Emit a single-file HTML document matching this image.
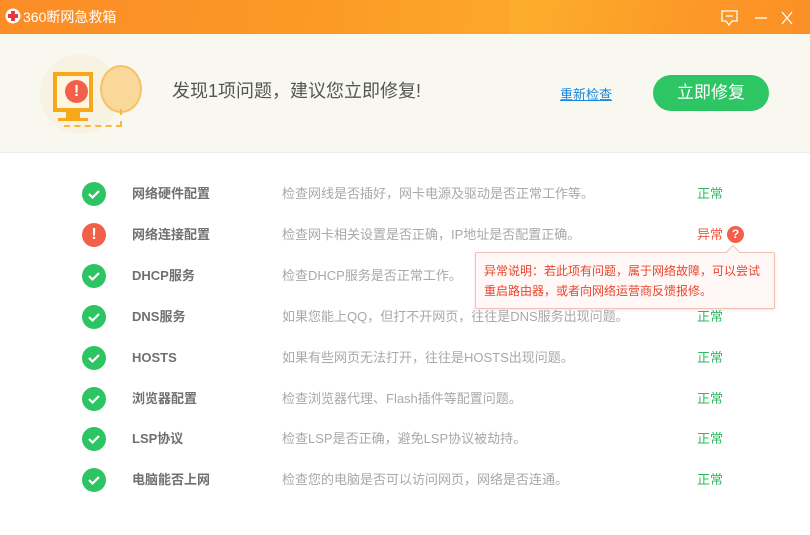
<!DOCTYPE html>
<html><head><meta charset="utf-8"><style>
*{margin:0;padding:0;box-sizing:border-box}
body{width:810px;height:535px;overflow:hidden;background:#fff;font-family:"Liberation Sans","Noto Sans CJK SC",sans-serif;position:relative}
.top{position:absolute;left:0;top:0;width:810px;height:34px;background:linear-gradient(100deg,#fb8c26 0%,#fb9a26 40%,#fda629 60%,#fb9026 100%);overflow:hidden}
.top .t{position:absolute;left:23px;top:0;line-height:34px;color:#fff;font-size:14px}
.banner{position:absolute;left:0;top:34px;width:810px;height:119px;background:#f8f8f1;border-bottom:1px solid #eee}
.row{position:absolute;left:0;height:24px;width:810px}
.ic{position:absolute;left:82px;top:0;width:24px;height:24px;border-radius:50%;background:#2dc563}
.ic.bad{background:#f2604a;color:#fff;font-weight:bold;text-align:center;line-height:24px;font-size:16px}
.nm,.ds,.st{position:absolute;top:0;line-height:24px;font-size:13px}
.nm{left:132px;font-weight:bold;color:#707070}
.ds{left:282px;color:#a8a8a8}
.st{left:697px;color:#2dba5f}
</style></head><body>
<div class="top">
<div style="position:absolute;left:510px;top:0;width:300px;height:34px;background:linear-gradient(110deg,rgba(255,190,50,.35),rgba(255,255,255,0) 60%)"></div>
<svg style="position:absolute;left:5px;top:8px" width="16" height="16"><circle cx="8" cy="8" r="7.5" fill="#fff"/><path d="M6 3h4v3h3v4h-3v3H6v-3H3V6h3z" fill="#e8383d"/></svg>
<span class="t">360断网急救箱</span>
<svg style="position:absolute;left:720px;top:9px" width="80" height="18"><path d="M2 2h15v10h-5l-3 4-3-4H2z M6 7h7" fill="none" stroke="#fff" stroke-width="1.3"/><path d="M35 9h12" stroke="#fff" stroke-width="1.3"/><path d="M62 3l10 12M72 3L62 15" stroke="#fff" stroke-width="1.3"/></svg>
</div>
<div class="banner">
<div style="position:absolute;left:40px;top:20px;width:80px;height:80px;border-radius:50%;background:#f7f2e2"></div>
<div style="position:absolute;left:100px;top:31px;width:42px;height:48px;border-radius:50%;background:#f9d89a;border:2px solid #f6c265"></div>
<div style="position:absolute;left:64px;top:75px;width:58px;height:18px;border:2px dashed #f6b93b;border-top:none;border-left:none"></div>
<div style="position:absolute;left:53px;top:38px;width:40px;height:40px;background:#fff6e0;border:4px solid #f7a81b"></div>
<div style="position:absolute;left:65px;top:46px;width:23px;height:23px;border-radius:50%;background:#f2604a;color:#fff;font-weight:bold;text-align:center;line-height:23px;font-size:16px">!</div>
<div style="position:absolute;left:66px;top:78px;width:14px;height:6px;background:#f7a81b"></div>
<div style="position:absolute;left:58px;top:84px;width:30px;height:3px;background:#f7a81b"></div>
<div style="position:absolute;left:172px;top:44px;line-height:26px;font-size:18px;color:#555">发现1项问题，建议您立即修复!</div>
<div style="position:absolute;left:560px;top:52px;line-height:18px;font-size:13px;color:#1a86dc;text-decoration:underline">重新检查</div>
<div style="position:absolute;left:653px;top:41px;width:116px;height:36px;border-radius:18px;background:#2ec664;color:#fff;font-size:17px;text-align:center;line-height:36px">立即修复</div>
</div>

<div class="row" style="top:182px"><div class="ic"><svg width="24" height="24"><path d="M7 12l3.5 3.5L17 9" fill="none" stroke="#fff" stroke-width="2.2"/></svg></div><div class="nm">网络硬件配置</div><div class="ds">检查网线是否插好，网卡电源及驱动是否正常工作等。</div><div class="st">正常</div></div>
<div class="row" style="top:223px"><div class="ic bad">!</div><div class="nm">网络连接配置</div><div class="ds">检查网卡相关设置是否正确，IP地址是否配置正确。</div><div class="st" style="color:#f0553e">异常</div><div style="position:absolute;left:727px;top:3px;width:17px;height:17px;border-radius:50%;background:#f2604a;color:#fff;font-size:12px;font-weight:bold;text-align:center;line-height:17px">?</div></div>
<div class="row" style="top:264px"><div class="ic"><svg width="24" height="24"><path d="M7 12l3.5 3.5L17 9" fill="none" stroke="#fff" stroke-width="2.2"/></svg></div><div class="nm">DHCP服务</div><div class="ds">检查DHCP服务是否正常工作。</div></div>
<div class="row" style="top:305px"><div class="ic"><svg width="24" height="24"><path d="M7 12l3.5 3.5L17 9" fill="none" stroke="#fff" stroke-width="2.2"/></svg></div><div class="nm">DNS服务</div><div class="ds">如果您能上QQ，但打不开网页，往往是DNS服务出现问题。</div><div class="st">正常</div></div>
<div class="row" style="top:346px"><div class="ic"><svg width="24" height="24"><path d="M7 12l3.5 3.5L17 9" fill="none" stroke="#fff" stroke-width="2.2"/></svg></div><div class="nm">HOSTS</div><div class="ds">如果有些网页无法打开，往往是HOSTS出现问题。</div><div class="st">正常</div></div>
<div class="row" style="top:387px"><div class="ic"><svg width="24" height="24"><path d="M7 12l3.5 3.5L17 9" fill="none" stroke="#fff" stroke-width="2.2"/></svg></div><div class="nm">浏览器配置</div><div class="ds">检查浏览器代理、Flash插件等配置问题。</div><div class="st">正常</div></div>
<div class="row" style="top:427px"><div class="ic"><svg width="24" height="24"><path d="M7 12l3.5 3.5L17 9" fill="none" stroke="#fff" stroke-width="2.2"/></svg></div><div class="nm">LSP协议</div><div class="ds">检查LSP是否正确，避免LSP协议被劫持。</div><div class="st">正常</div></div>
<div class="row" style="top:468px"><div class="ic"><svg width="24" height="24"><path d="M7 12l3.5 3.5L17 9" fill="none" stroke="#fff" stroke-width="2.2"/></svg></div><div class="nm">电脑能否上网</div><div class="ds">检查您的电脑是否可以访问网页，网络是否连通。</div><div class="st">正常</div></div>

<div style="position:absolute;left:475px;top:252px;width:300px;height:57px;background:#fff8f6;border:1px solid #f0c0b5;border-radius:2px;box-shadow:0 1px 3px rgba(0,0,0,.1);padding:8px 0 0 8px;font-size:12px;line-height:20px;color:#e8452e">异常说明：若此项有问题，属于网络故障，可以尝试<br>重启路由器，或者向网络运营商反馈报修。</div>
<div style="position:absolute;left:728px;top:247px;width:10px;height:10px;background:#fff8f6;border-left:1px solid #f0c0b5;border-top:1px solid #f0c0b5;transform:rotate(45deg)"></div>
</body></html>
